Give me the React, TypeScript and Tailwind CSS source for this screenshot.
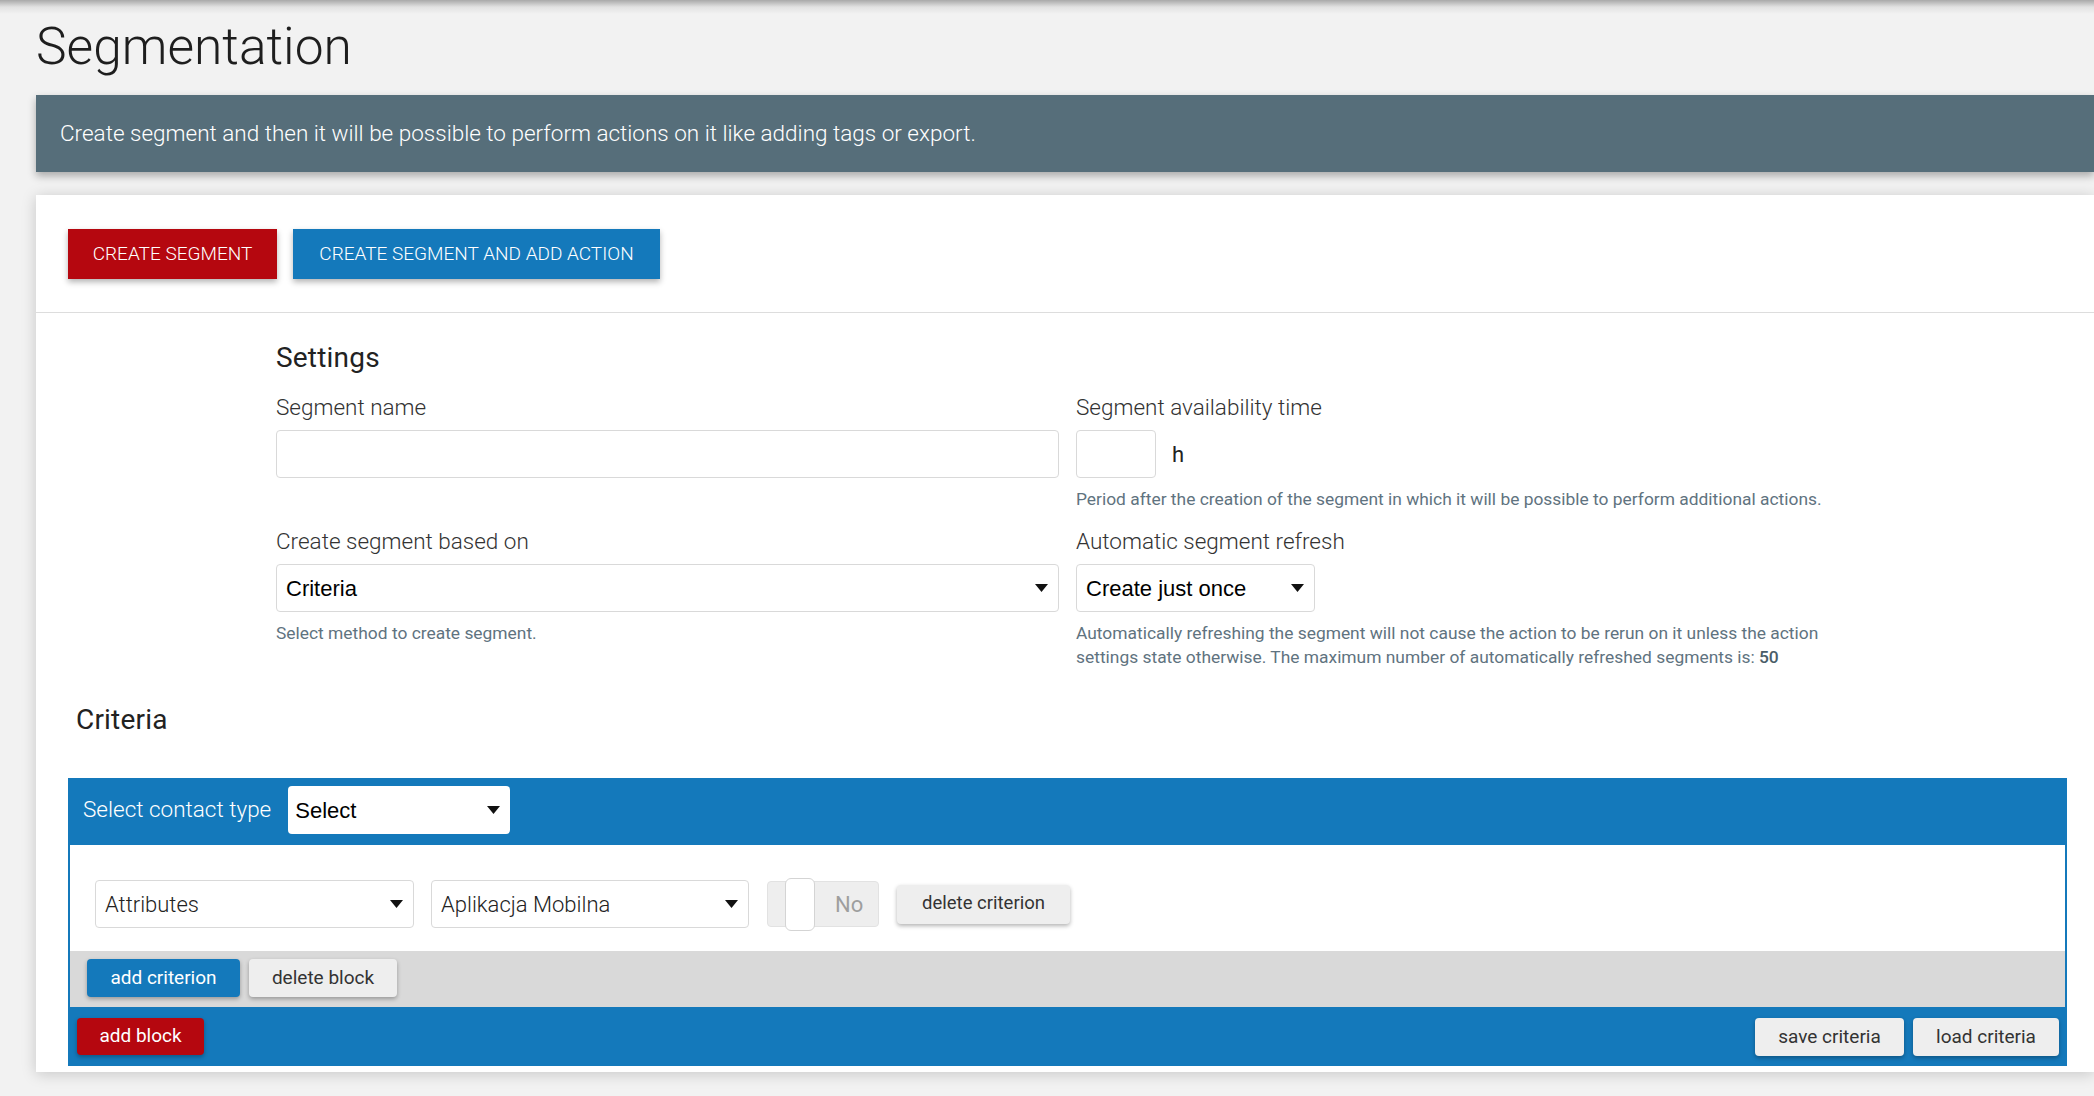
const Arrow = () => (
  <svg width="13" height="8" viewBox="0 0 13 8" className="shrink-0">
    <path d="M0 0h13L6.5 8z" fill="#111" />
  </svg>
);

const Select = ({
  value,
  width,
  arial,
}: {
  value: string;
  width: string;
  arial?: boolean;
}) => (
  <div
    className={`flex h-[48px] ${width} items-center justify-between rounded-[4px] border border-[#d9d9d9] bg-white pl-[9px] pr-[10px]`}
  >
    <span
      className={
        arial
          ? "font-['Liberation_Sans',Arial,sans-serif] text-[22px] text-black"
          : "text-[22px] font-light text-[#222]"
      }
    >
      {value}
    </span>
    <Arrow />
  </div>
);

const GrayButton = ({ label, width }: { label: string; width: string }) => (
  <button
    className={`h-[38px] ${width} rounded-[4px] bg-[#eeeeee] text-[19px] text-[#333] shadow-[0_2px_4px_rgba(0,0,0,0.3)]`}
  >
    {label}
  </button>
);

const Label = ({ children }: { children: React.ReactNode }) => (
  <label className="block text-[22.5px] font-light leading-[27px] text-[#333]">
    {children}
  </label>
);

const Help = ({ children }: { children: React.ReactNode }) => (
  <p className="mt-[9px] text-[17.4px] leading-[24px] text-[#5f7380]">
    {children}
  </p>
);

export default function App() {
  return (
    <div className="min-h-screen overflow-hidden bg-[#f2f2f2] font-['Roboto',sans-serif]">
      <div className="h-[14px] bg-linear-to-b from-[#a9a9a9] via-[#e2e2e2] to-[#f2f2f2]" />

      <div className="pl-[36px]">
        <h1 className="mt-[2px] text-[51.5px] font-light leading-[62px] text-[#1e1e1e]">
          Segmentation
        </h1>

        <div className="mt-[17px] flex h-[77px] items-center bg-[#566e7a] pl-[24px] shadow-[0_4px_8px_rgba(0,0,0,0.3)]">
          <p className="pt-[1px] text-[22.5px] font-light text-white">
            Create segment and then it will be possible to perform actions on it like adding tags or export.
          </p>
        </div>

        <div className="mt-[23px] bg-white pb-[6px] shadow-[0_2px_14px_rgba(0,0,0,0.18)]">
          {/* actions */}
          <div className="flex gap-[16px] border-b border-[#dddddd] px-[32px] pt-[34px] pb-[33px]">
            <button className="h-[50px] w-[209px] bg-[#b5070f] text-[19px] font-light uppercase text-white shadow-[0_3px_6px_rgba(0,0,0,0.3)]">
              Create segment
            </button>
            <button className="h-[50px] w-[367px] bg-[#1479bb] text-[19px] font-light uppercase text-white shadow-[0_3px_6px_rgba(0,0,0,0.3)]">
              Create segment and add action
            </button>
          </div>

          <div className="pl-[32px] pr-[27px]">
            {/* settings */}
            <div className="ml-[208px] w-[1583px] pt-[29px]">
              <h2 className="text-[28px] leading-[32px] tracking-[0.2px] text-[#222]">Settings</h2>
              <div className="mt-[20px] grid grid-cols-2 gap-x-[17px] gap-y-[17px]">
                <div>
                  <Label>Segment name</Label>
                  <input className="mt-[9px] block h-[48px] w-full rounded-[4px] border border-[#d9d9d9] bg-white" />
                </div>
                <div>
                  <Label>Segment availability time</Label>
                  <div className="mt-[9px] flex items-center">
                    <input className="block h-[48px] w-[80px] rounded-[4px] border border-[#d9d9d9] bg-white" />
                    <span className="ml-[16px] text-[22px] text-[#222]">h</span>
                  </div>
                  <Help>
                    Period after the creation of the segment in which it will be possible to perform additional actions.
                  </Help>
                </div>
                <div>
                  <Label>Create segment based on</Label>
                  <div className="mt-[9px]">
                    <Select value="Criteria" width="w-full" arial />
                  </div>
                  <Help>Select method to create segment.</Help>
                </div>
                <div>
                  <Label>Automatic segment refresh</Label>
                  <div className="mt-[9px]">
                    <Select value="Create just once" width="w-[239px]" arial />
                  </div>
                  <Help>
                    Automatically refreshing the segment will not cause the action to be rerun on it unless the action settings state otherwise. The maximum number of automatically refreshed segments is:{" "}
                    <span className="font-medium text-[#4a5d68]">50</span>
                  </Help>
                </div>
              </div>
            </div>

            {/* criteria */}
            <h2 className="mt-[35px] ml-[8px] text-[28px] leading-[32px] tracking-[0.2px] text-[#222]">
              Criteria
            </h2>

            <div className="mt-[42px] border-2 border-[#1479bb] bg-[#1479bb]">
              <div className="flex h-[65px] items-start pl-[13px] pt-[6px]">
                <div className="flex h-[48px] items-center">
                  <span className="text-[22.5px] font-light text-white">Select contact type</span>
                  <div className="ml-[17px] flex h-[48px] w-[222px] items-center justify-between rounded-[4px] bg-white pl-[7px] pr-[10px]">
                    <span className="font-['Liberation_Sans',Arial,sans-serif] text-[22px] text-black">
                      Select
                    </span>
                    <Arrow />
                  </div>
                </div>
              </div>

              <div className="h-[106px] bg-white pl-[25px] pt-[35px]">
                <div className="flex h-[48px] items-center">
                  <Select value="Attributes" width="w-[319px]" />
                  <div className="ml-[17px]">
                    <Select value="Aplikacja Mobilna" width="w-[318px]" />
                  </div>
                  <div className="ml-[18px] flex h-[46px] w-[112px] items-center rounded-[4px] border border-[#e2e2e2] bg-[#eeeeee]">
                    <div className="ml-[17px] h-[53px] w-[30px] shrink-0 rounded-[6px] border border-[#d4d4d4] bg-white" />
                    <span className="ml-[20px] text-[22px] text-[#9e9e9e]">No</span>
                  </div>
                  <div className="ml-[18px]">
                    <button className="h-[39px] w-[173px] rounded-[4px] bg-[#eeeeee] text-[18.5px] text-[#333] shadow-[0_2px_4px_rgba(0,0,0,0.3)]">
                      delete criterion
                    </button>
                  </div>
                </div>
              </div>

              <div className="flex h-[56px] gap-[9px] bg-[#d9d9d9] pl-[17px] pt-[8px]">
                <button className="h-[38px] w-[153px] rounded-[4px] bg-[#1479bb] text-[19px] text-white shadow-[0_2px_4px_rgba(0,0,0,0.3)]">
                  add criterion
                </button>
                <GrayButton label="delete block" width="w-[148px]" />
              </div>

              <div className="flex h-[57px] justify-between pl-[7px] pr-[6px] pt-[11px]">
                <button className="h-[37px] w-[127px] rounded-[4px] bg-[#b5070f] text-[19px] text-white shadow-[0_2px_4px_rgba(0,0,0,0.3)]">
                  add block
                </button>
                <div className="flex gap-[9px]">
                  <GrayButton label="save criteria" width="w-[149px]" />
                  <GrayButton label="load criteria" width="w-[146px]" />
                </div>
              </div>
            </div>
          </div>
        </div>
      </div>
    </div>
  );
}
